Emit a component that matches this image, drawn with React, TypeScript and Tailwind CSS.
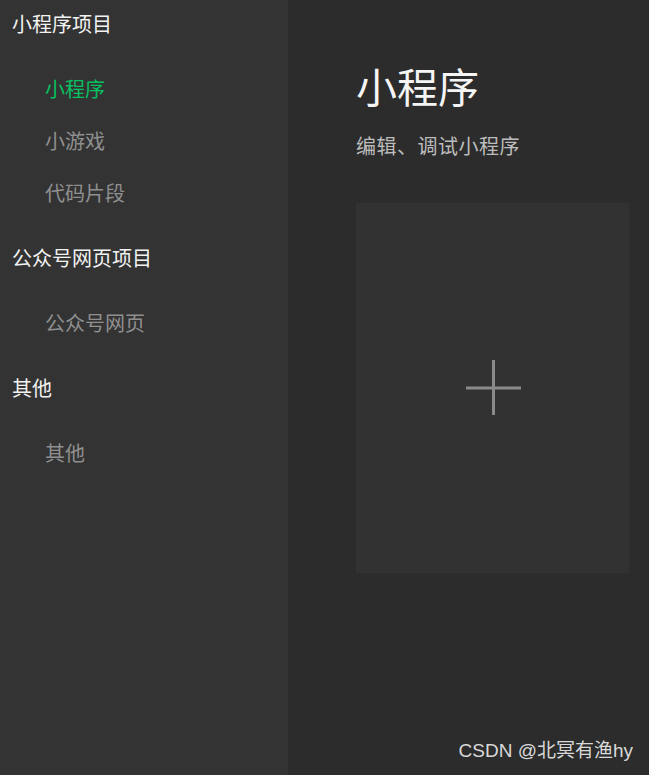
const groups = [
  { title: "小程序项目", items: ["小程序", "小游戏", "代码片段"] },
  { title: "公众号网页项目", items: ["公众号网页"] },
  { title: "其他", items: ["其他"] },
];

const App = () => {
  const active = "小程序";

  return (
    <div
      className="relative flex w-[649px] h-[775px] overflow-hidden bg-[#2c2c2c]"
      style={{ fontFamily: '"Noto Sans CJK SC", "Noto Sans", sans-serif' }}
    >
      {/* sidebar */}
      <aside className="w-[288px] shrink-0 bg-[#333333]">
        {groups.map((g) => (
          <div key={g.title} className="pb-[15px]">
            <h3 className="h-12 pl-3 leading-[48px] text-[20px] text-[#f2f2f2]">
              {g.title}
            </h3>
            <ul className="mt-[15px]">
              {g.items.map((item) => (
                <li
                  key={item}
                  className={`h-[52px] pl-[45px] leading-[52px] text-[20px] ${
                    item === active ? "text-[#07c160]" : "text-[#8f8f8f]"
                  }`}
                >
                  {item}
                </li>
              ))}
            </ul>
          </div>
        ))}
      </aside>

      {/* main */}
      <main className="flex-1 pl-[68px] pt-[59px]">
        <h1 className="h-[52px] leading-[52px] text-[41px] text-[#f5f5f5]">
          小程序
        </h1>
        <p className="mt-[23px] leading-[24px] text-[20px] tracking-[0.5px] text-[#bdbdbd]">
          编辑、调试小程序
        </p>
        <button className="mt-[45px] flex w-[273px] h-[370px] items-center justify-center bg-[#323232]">
          <svg width="56" height="56" viewBox="0 0 56 56" className="ml-[2px]">
            <rect x="0" y="26.5" width="55" height="3" fill="#8a8a8a" />
            <rect x="26" y="0" width="3" height="55" fill="#8a8a8a" />
          </svg>
        </button>
      </main>

      <span
        className="absolute right-[16px] bottom-[10px] text-[19px] text-[#d9d9d9]"
        style={{ fontFamily: '"Liberation Sans", "Noto Sans CJK SC", sans-serif' }}
      >
        CSDN @北冥有渔hy
      </span>
    </div>
  );
};

export default App;
